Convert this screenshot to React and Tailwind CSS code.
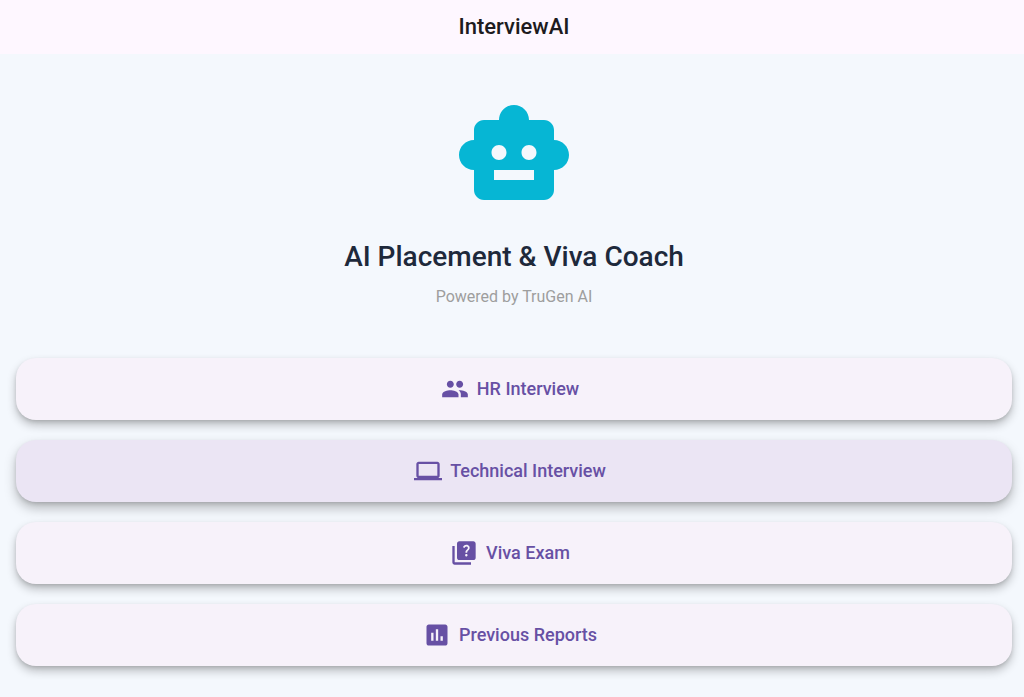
import { MdPeople, MdLaptop, MdQuiz, MdAssessment } from "react-icons/md";

const actions = [
  { label: "HR Interview", icon: MdPeople },
  { label: "Technical Interview", icon: MdLaptop, active: true },
  { label: "Viva Exam", icon: MdQuiz },
  { label: "Previous Reports", icon: MdAssessment },
];

export default function App() {
  return (
    <div className="min-h-screen bg-[#f4f8fd] font-['Roboto',sans-serif]">
      {/* APP BAR */}
      <header className="flex h-[54px] items-center justify-center bg-[#fef7ff] pr-3 pl-4">
        <h1 className="text-[22px] leading-7 font-medium text-[#1d1b20]">InterviewAI</h1>
      </header>

      <main className="flex flex-col pt-[41px] pr-3 pl-4">
        {/* HERO */}
        <div className="flex flex-col items-center">
          <svg viewBox="0 0 24 24" className="size-[120px] fill-[#06b6d4]" aria-hidden="true">
            <path d="M20 9V7c0-1.100-.9-2-2-2h-3c0-1.660-1.340-3-3-3S9 3.340 9 5H6c-1.100 0-2 .9-2 2v2c-1.660 0-3 1.340-3 3s1.340 3 3 3v4c0 1.100.9 2 2 2h12c1.100 0 2-.9 2-2v-4c1.660 0 3-1.340 3-3s-1.340-3-3-3zM7.500 11.500c0-.83.67-1.500 1.500-1.500s1.500.67 1.500 1.500S9.830 13 9 13s-1.500-.67-1.500-1.500zM16 17H8v-2h8v2zm-1-4c-.83 0-1.500-.67-1.500-1.500S14.170 10 15 10s1.500.67 1.500 1.500S15.830 13 15 13z" />
          </svg>
          <h2 className="mt-6 text-[28px] leading-9 font-medium text-[#1e293b]">
            AI Placement &amp; Viva Coach
          </h2>
          <p className="mt-3 text-base leading-5 text-[#9e9e9e]">Powered by TruGen AI</p>
        </div>

        {/* ACTIONS */}
        <nav className="mt-[51px] flex flex-col gap-5 pb-7">
          {actions.map(({ label, icon: Icon, active }) => (
            <button
              key={label}
              type="button"
              className={`flex h-[62px] w-full items-center justify-center gap-2 rounded-[20px] pr-6 pl-4 text-lg font-medium text-[#6750a4] ${
                active
                  ? "bg-[#ebe5f4] shadow-[0_2px_4px_-1px_rgba(0,0,0,0.16),0_6px_12px_rgba(0,0,0,0.26)]"
                  : "bg-[#f7f2fa] shadow-[0_2px_4px_-1px_rgba(0,0,0,0.16),0_5px_10px_rgba(0,0,0,0.24)]"
              }`}
            >
              <Icon className="size-7" aria-hidden="true" />
              {label}
            </button>
          ))}
        </nav>
      </main>
    </div>
  );
}
